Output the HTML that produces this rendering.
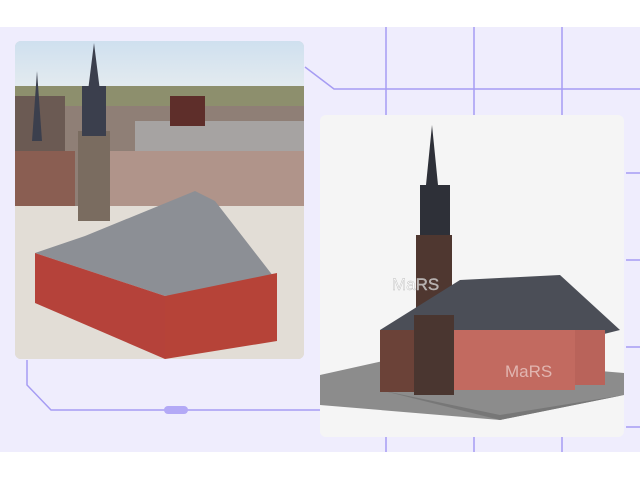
<!DOCTYPE html>
<html><head><style>
body{margin:0;width:640px;height:480px;background:#fff;position:relative;overflow:hidden;font-family:"Liberation Sans",sans-serif}
.band{position:absolute;left:0;top:27px;width:640px;height:425px;background:#efedfd}
.card{position:absolute;overflow:hidden;border-radius:6px}
</style></head><body>
<div class="band"></div>
<svg style="position:absolute;left:0;top:0" width="640" height="480">
<g stroke="#a69cf3" stroke-width="1.5" fill="none">
<line x1="386" y1="27" x2="386" y2="115"/><line x1="474" y1="27" x2="474" y2="115"/><line x1="562" y1="27" x2="562" y2="115"/>
<line x1="386" y1="437" x2="386" y2="452"/><line x1="474" y1="437" x2="474" y2="452"/><line x1="562" y1="437" x2="562" y2="452"/>
<polyline points="305,67 334,89 640,89"/>
<line x1="626" y1="173" x2="640" y2="173"/><line x1="626" y1="260" x2="640" y2="260"/><line x1="626" y1="347" x2="640" y2="347"/><line x1="626" y1="427" x2="640" y2="427"/>
<polyline points="27,360 27,385 51,410 320,410"/>
</g>
<rect x="164" y="406" width="24" height="8" rx="4" fill="#b3a9f6"/>
</svg>
<div class="card" style="left:15px;top:41px;width:289px;height:318px;background:#d9d3cb">
<svg width="289" height="318">
<defs><linearGradient id="sky" x1="0" y1="0" x2="0" y2="1"><stop offset="0" stop-color="#cfe0ef"/><stop offset="1" stop-color="#e4ebef"/></linearGradient></defs>
<rect width="289" height="48" fill="url(#sky)"/>
<rect y="45" width="289" height="25" fill="#8d8f6d"/>
<rect y="65" width="289" height="110" fill="#8f7f76"/>
<rect x="0" y="55" width="50" height="130" fill="#6b5a53"/>
<rect x="120" y="80" width="170" height="30" fill="#a6a3a2"/>
<rect x="95" y="110" width="195" height="60" fill="#b0948a"/>
<rect x="0" y="110" width="60" height="70" fill="#8a5e52"/>
<rect x="155" y="55" width="35" height="30" fill="#5e2e2a"/>
<rect x="0" y="165" width="289" height="153" fill="#e2ddd6"/>
<rect x="63" y="90" width="32" height="90" fill="#7a6c60"/>
<rect x="67" y="45" width="24" height="50" fill="#3b3f4d"/>
<polygon points="79,2 73,50 85,50" fill="#3b3f4d"/>
<polygon points="22,30 17,100 27,100" fill="#3b3f4d"/>
<polygon points="70,195 180,150 200,160 262,240 150,255 20,212" fill="#8c8f95"/>
<polygon points="20,212 150,255 150,318 20,262" fill="#b5423a"/>
<polygon points="150,255 262,232 262,300 150,318" fill="#b64338"/>
</svg></div>
<div class="card" style="left:320px;top:115px;width:304px;height:322px;background:#f5f5f5">
<svg width="304" height="322">
<polygon points="0,260 90,240 304,258 304,280 180,305 0,290" fill="#8c8c8c"/>
<polygon points="60,275 180,300 304,280 180,305" fill="#777"/>
<polygon points="112,10 106,70 118,70" fill="#2e3038"/>
<rect x="100" y="70" width="30" height="50" fill="#2e3038"/>
<rect x="96" y="120" width="36" height="100" fill="#4f3730"/>
<polygon points="60,215 140,165 240,160 300,215 240,230 60,230" fill="#4b4e57"/>
<rect x="60" y="215" width="60" height="62" fill="#6b4238"/>
<rect x="120" y="215" width="135" height="60" fill="#c26a60"/>
<rect x="255" y="215" width="30" height="55" fill="#b9635a"/>
<rect x="94" y="200" width="40" height="80" fill="#4a3630"/>
<text x="72" y="175" font-size="17" fill="#fff" fill-opacity="0.6" stroke="#bbb" stroke-width="0.4">MaRS</text>
<text x="185" y="262" font-size="17" fill="#fff" fill-opacity="0.5">MaRS</text>
</svg></div>
</body></html>
